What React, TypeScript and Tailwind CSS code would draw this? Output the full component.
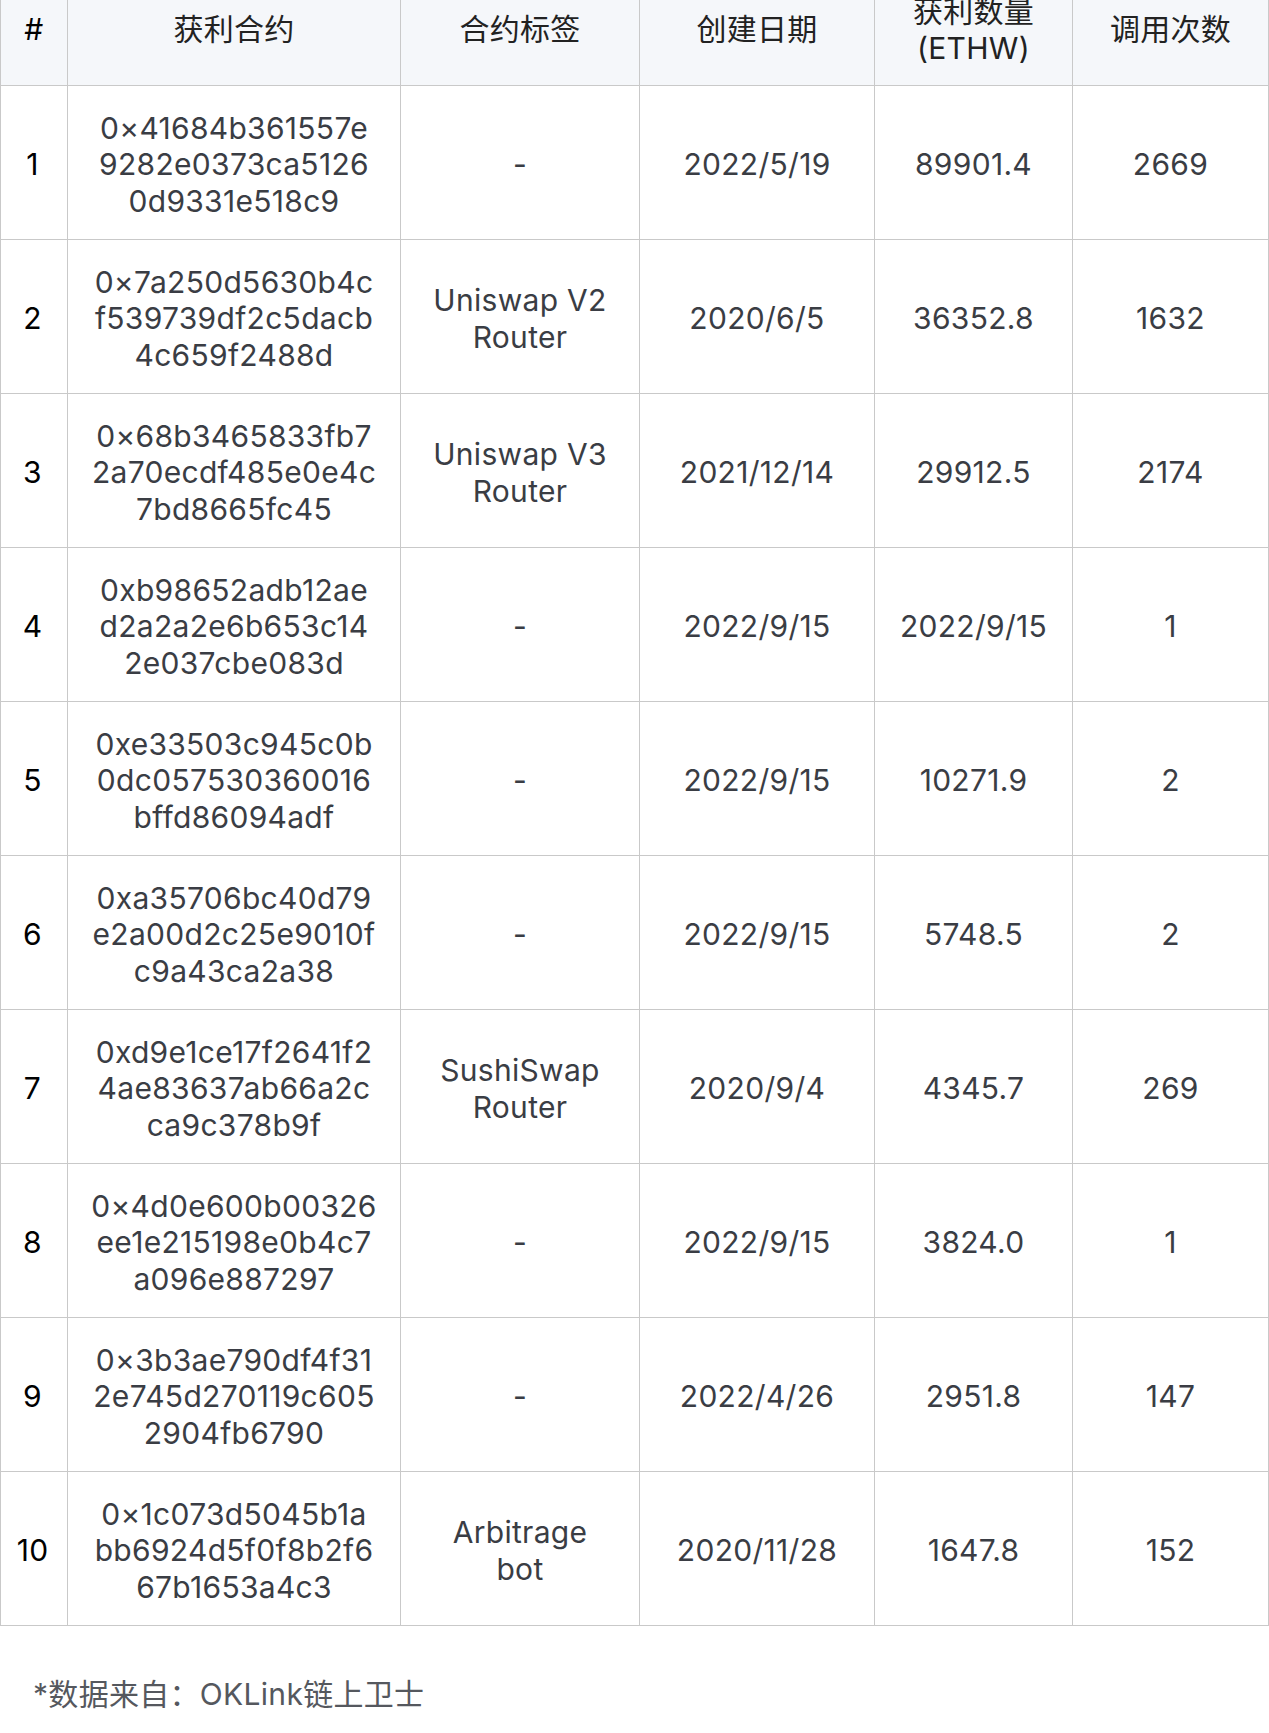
import React from "react";

const rows = [
  ["1", ["0×41684b361557e", "9282e0373ca5126", "0d9331e518c9"], ["-"], "2022/5/19", "89901.4", "2669"],
  ["2", ["0×7a250d5630b4c", "f539739df2c5dacb", "4c659f2488d"], ["Uniswap V2", "Router"], "2020/6/5", "36352.8", "1632"],
  ["3", ["0×68b3465833fb7", "2a70ecdf485e0e4c", "7bd8665fc45"], ["Uniswap V3", "Router"], "2021/12/14", "29912.5", "2174"],
  ["4", ["0xb98652adb12ae", "d2a2a2e6b653c14", "2e037cbe083d"], ["-"], "2022/9/15", "2022/9/15", "1"],
  ["5", ["0xe33503c945c0b", "0dc057530360016", "bffd86094adf"], ["-"], "2022/9/15", "10271.9", "2"],
  ["6", ["0xa35706bc40d79", "e2a00d2c25e9010f", "c9a43ca2a38"], ["-"], "2022/9/15", "5748.5", "2"],
  ["7", ["0xd9e1ce17f2641f2", "4ae83637ab66a2c", "ca9c378b9f"], ["SushiSwap", "Router"], "2020/9/4", "4345.7", "269"],
  ["8", ["0×4d0e600b00326", "ee1e215198e0b4c7", "a096e887297"], ["-"], "2022/9/15", "3824.0", "1"],
  ["9", ["0×3b3ae790df4f31", "2e745d270119c605", "2904fb6790"], ["-"], "2022/4/26", "2951.8", "147"],
  ["10", ["0×1c073d5045b1a", "bb6924d5f0f8b2f6", "67b1653a4c3"], ["Arbitrage", "bot"], "2020/11/28", "1647.8", "152"],
] as const;

const font = { fontFamily: "Inter, 'Noto Sans CJK SC', sans-serif" };

function Lines({ lines }: { lines: readonly string[] }) {
  return (
    <div className="flex flex-col items-center">
      {lines.map((l, i) => (
        <span key={i}>{l}</span>
      ))}
    </div>
  );
}

export default function App() {
  return (
    <div className="relative w-[1269px] h-[1733px] overflow-hidden bg-white text-[30px] leading-[36.5px] tracking-[0.3px]" style={font}>
      <div className="-mt-[27px] grid grid-cols-[66px_332px_238px_234px_197px_195px] gap-px bg-[#c9c9c9] border border-[#c9c9c9]">
        <div className="h-[111px] bg-[#f5f7fa] flex items-center justify-center text-black">#</div>
        <div className="h-[111px] bg-[#f5f7fa] flex items-center justify-center text-[#222]">获利合约</div>
        <div className="h-[111px] bg-[#f5f7fa] flex items-center justify-center text-[#222]">合约标签</div>
        <div className="h-[111px] bg-[#f5f7fa] flex items-center justify-center text-[#222]">创建日期</div>
        <div className="h-[111px] bg-[#f5f7fa] flex flex-col items-center justify-center text-[#222]">
          <span>获利数量</span>
          <span>(ETHW)</span>
        </div>
        <div className="h-[111px] bg-[#f5f7fa] flex items-center justify-center text-[#222]">调用次数</div>
        {rows.map((r) => (
          <React.Fragment key={r[0]}>
            <div className="h-[153px] pt-[4px] pr-[3px] bg-white flex items-center justify-center text-black">{r[0]}</div>
            <div className="h-[153px] pt-[4px] bg-white flex items-center justify-center text-[#3a3d44]">
              <Lines lines={r[1]} />
            </div>
            <div className="h-[153px] pt-[4px] bg-white flex items-center justify-center text-[#3a3d44]">
              <Lines lines={r[2]} />
            </div>
            <div className="h-[153px] pt-[4px] bg-white flex items-center justify-center text-[#3a3d44]">{r[3]}</div>
            <div className="h-[153px] pt-[4px] bg-white flex items-center justify-center text-[#3a3d44]">{r[4]}</div>
            <div className="h-[153px] pt-[4px] bg-white flex items-center justify-center text-[#3a3d44]">{r[5]}</div>
          </React.Fragment>
        ))}
      </div>
      <div className="pl-[33px] pt-[50px] text-[#55585e]">*数据来自：OKLink链上卫士</div>
    </div>
  );
}
